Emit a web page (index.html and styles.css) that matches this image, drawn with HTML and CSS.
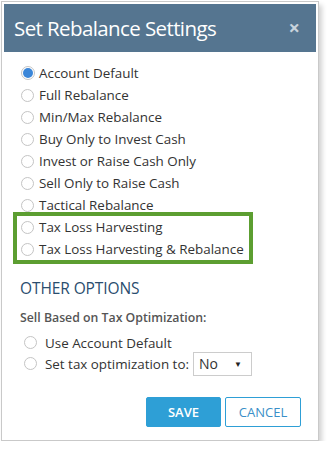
FILE: index.html
```html
<!DOCTYPE html>
<html>
<head>
<meta charset="utf-8">
<link rel="stylesheet" href="styles.css">
</head>
<body>
<div class="dialog">
  <div class="header">
    <span class="title">Set Rebalance Settings</span>
    <span class="close">×</span>
  </div>
  <div class="content">
    <div class="options">
      <div class="row"><span class="radio checked"></span><span>Account Default</span></div>
      <div class="row"><span class="radio"></span><span>Full Rebalance</span></div>
      <div class="row"><span class="radio"></span><span>Min/Max Rebalance</span></div>
      <div class="row"><span class="radio"></span><span>Buy Only to Invest Cash</span></div>
      <div class="row"><span class="radio"></span><span>Invest or Raise Cash Only</span></div>
      <div class="row"><span class="radio"></span><span>Sell Only to Raise Cash</span></div>
      <div class="row"><span class="radio"></span><span>Tactical Rebalance</span></div>
      <div class="highlight">
        <div class="row"><span class="radio"></span><span>Tax Loss Harvesting</span></div>
        <div class="row"><span class="radio"></span><span>Tax Loss Harvesting &amp; Rebalance</span></div>
      </div>
    </div>
    <div class="section-title">OTHER OPTIONS</div>
    <div class="label">Sell Based on Tax Optimization:</div>
    <div class="sub">
      <div class="row2"><span class="radio"></span><span>Use Account Default</span></div>
      <div class="row2"><span class="radio"></span><span>Set tax optimization to:</span>
        <span class="select"><span>No</span><span class="caret">▼</span></span></div>
    </div>
    <div class="buttons">
      <span class="btn save">SAVE</span>
      <span class="btn cancel">CANCEL</span>
    </div>
  </div>
</div>
</body>
</html>
```

FILE: styles.css
```css
html, body { margin: 0; padding: 0; background: #fff; }
body { font-family: "Open Sans", "Noto Sans", sans-serif; color: #333; }
.dialog {
  margin: 1px 0 0 1px;
  width: 312px;
  height: 434px;
  border: 1px solid #c9c9c9;
  padding: 2px;
  background: #fff;
  box-shadow: 3px 4px 5px rgba(0,0,0,0.18);
  display: flex;
  flex-direction: column;
}
.header {
  background: #557590;
  height: 48px;
  display: flex;
  align-items: center;
  justify-content: space-between;
  padding: 0 16px 0 10px;
  flex: none;
}
.title { color: #fff; font-size: 20.5px; letter-spacing: -0.6px; padding-bottom: 1px; }
.close { color: #c8d3dd; font-size: 20px; font-weight: bold; line-height: 1; }
.content { padding: 10px 0 0 14px; display: flex; flex-direction: column; flex: 1; }
.options { display: flex; flex-direction: column; padding-left: 3px; }
.row { height: 22px; display: flex; align-items: center; font-size: 13.4px; }
.radio {
  width: 13px; height: 13px;
  border: 1px solid #c4c4c4;
  border-radius: 50%;
  background: #fff;
  margin-right: 5px;
  flex: none;
  box-sizing: border-box;
  position: relative;
}
.radio.checked { width: 14px; height: 14px; margin-right: 4px; }
.radio.checked::after {
  content: ""; position: absolute; left: 1px; top: 1px; width: 10px; height: 10px;
  border-radius: 50%; background: #3b86d8;
}
.highlight {
  margin: -4px 0 0 -8px;
  width: 240px;
  box-sizing: border-box;
  border: 4px solid #5c9e31;
  padding-left: 4px;
  display: flex; flex-direction: column;
}
.section-title { color: #2a4d6e; font-size: 15.5px; margin-top: 13px; padding-left: 2px; letter-spacing: -0.1px; }
.label { color: #555; font-size: 12.3px; font-weight: 600; margin-top: 10px; padding-left: 2px; }
.sub { padding-left: 6px; margin-top: 6px; display: flex; flex-direction: column; }
.row2 { height: 21px; display: flex; align-items: center; font-size: 13.4px; }
.row2 .radio { width: 13px; height: 13px; margin-right: 8px; }
.select {
  margin-left: 4px;
  width: 59px; height: 24px; box-sizing: border-box;
  border: 1px solid #ccc;
  display: flex; align-items: center; justify-content: space-between;
  padding: 0 9px 0 5px;
  font-size: 14px; color: #333;
}
.caret { font-size: 8px; color: #222; }
.buttons { display: flex; justify-content: flex-end; gap: 4px; margin-top: 23px; padding-right: 15px; }
.btn {
  width: 75px; height: 30px; box-sizing: border-box;
  display: flex; align-items: center; justify-content: center;
  font-size: 13px; border-radius: 2px;
}
.save { background: #2e9fd6; color: #fff; border: 1px solid #2e9fd6; font-weight: 600; }
.cancel { background: #fff; color: #3a8fc8; border: 1px solid #2e9fd6; width: 76px; }
```
